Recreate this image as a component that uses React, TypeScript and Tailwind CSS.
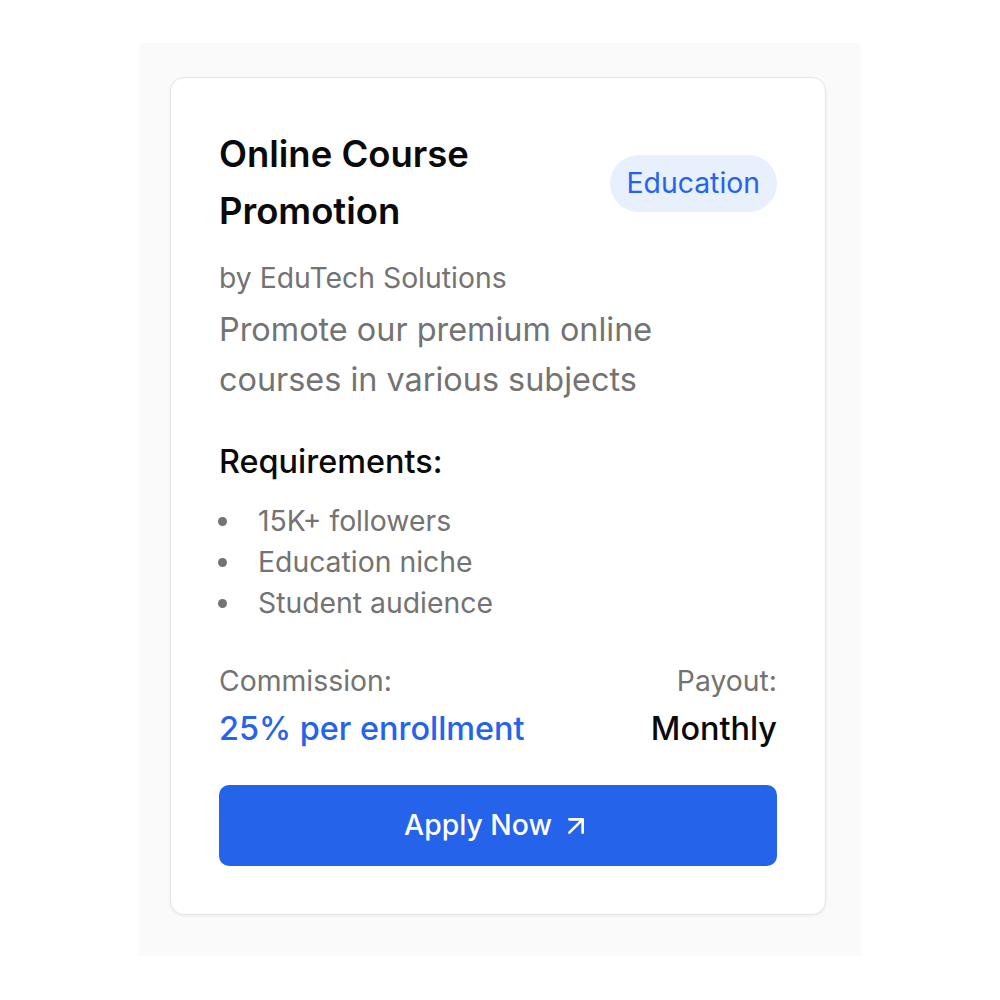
import React from "react";
import { ArrowUpRight } from "lucide-react";

export default function App() {
  return (
    <div className="min-h-[1000px] bg-white pt-[43px]" style={{ fontFamily: "Inter, 'Noto Sans', sans-serif" }}>
      <div className="mx-auto w-[722px] bg-[#fafafa] pt-[34px] pb-[41px] pl-[31px] pr-[35px]">
        <div className="rounded-[14px] border border-[#e5e5e5] bg-white p-[48px] shadow-[0_1px_3px_rgba(0,0,0,0.06)]">
          <div className="flex items-center justify-between">
            <h2 className="text-[36.45px] font-semibold leading-[57px] text-[#0a0a0a]">
              Online Course
              <br />
              Promotion
            </h2>
            <span className="rounded-full bg-[#e8effd] px-[17px] text-[28.35px] leading-[57px] text-[#2563eb]">
              Education
            </span>
          </div>
          <p className="mt-[20px] text-[28.35px] leading-[36px] text-[#737373]">by EduTech Solutions</p>
          <p className="mt-[9px] text-[32.4px] leading-[50px] text-[#737373]">
            Promote our premium online
            <br />
            courses in various subjects
          </p>
          <h3 className="mt-[37px] text-[32.4px] font-medium leading-[40px] text-[#0a0a0a]">Requirements:</h3>
          <ul className="mt-[19px]">
            {["15K+ followers", "Education niche", "Student audience"].map((t) => (
              <li key={t} className="flex items-center text-[28.35px] leading-[41px] text-[#737373]">
                <span className="ml-[-1px] mr-[31px] h-[9px] w-[9px] rounded-full bg-[#737373]" />
                {t}
              </li>
            ))}
          </ul>
          <div className="mt-[39px] flex justify-between">
            <div>
              <div className="text-[28.35px] leading-[36px] text-[#737373]">Commission:</div>
              <div className="mt-[8px] text-[32.4px] font-medium leading-[44px] text-[#2563eb]">25% per enrollment</div>
            </div>
            <div className="text-right">
              <div className="text-[28.35px] leading-[36px] text-[#737373]">Payout:</div>
              <div className="mt-[8px] text-[32.4px] font-medium leading-[44px] text-[#0a0a0a]">Monthly</div>
            </div>
          </div>
          <button className="mt-[34px] flex h-[81px] w-full items-center justify-center gap-[8px] rounded-[10px] bg-[#2563eb] text-[28.35px] font-medium text-white">
            Apply Now
            <ArrowUpRight size={32} strokeWidth={2} />
          </button>
        </div>
      </div>
    </div>
  );
}
